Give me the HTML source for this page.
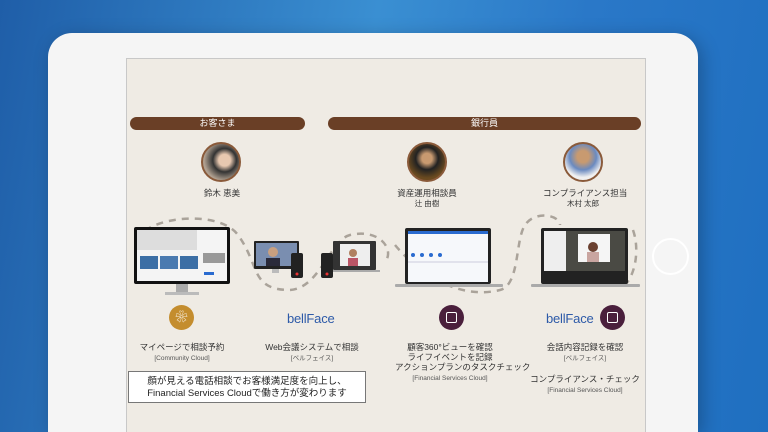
<!DOCTYPE html>
<html><head><meta charset="utf-8"><style>
*{margin:0;padding:0;box-sizing:border-box}
html,body{width:768px;height:432px;overflow:hidden}
body{position:relative;font-family:"Liberation Sans","Noto Sans CJK JP",sans-serif;background:linear-gradient(100deg,#1f5ea8 0%,#3a8fd2 45%,#2a78c8 70%,#1f6fc0 100%)}
.tab{position:absolute;left:48px;top:33px;width:650px;height:399px;background:#f5f5f5;border-radius:24px 24px 0 0;box-shadow:4px 4px 18px rgba(0,0,0,.25)}
.scr{position:absolute;left:126px;top:58px;width:520px;height:374px;background:#efebe4;border:1px solid #c8c8c8;border-bottom:none}
.home{position:absolute;left:652px;top:238px;width:37px;height:37px;border-radius:50%;border:2px solid #fff}
.a{position:absolute}
.bar{position:absolute;height:13px;background:#6a3f26;border-radius:7px;color:#fff;font-size:9px;text-align:center;line-height:13px}
.av{position:absolute;width:40px;height:40px;border-radius:50%;border:2px solid #8a5a3a;overflow:hidden}
.t{position:absolute;font-size:8.5px;color:#333;text-align:center;line-height:10px;white-space:nowrap}
.s{font-size:6.5px;color:#555}
.bf{position:absolute;font-size:13px;color:#2d5aa8;letter-spacing:-.2px}
.ic{position:absolute;width:25px;height:25px;border-radius:50%}
</style></head><body>
<div class="tab"></div>
<div class="home"></div>
<div class="scr"></div>
<svg class="a" style="left:0;top:0" width="768" height="432">
<g fill="none" stroke="#aaa39a" stroke-width="2.5" stroke-dasharray="7 6">
<path d="M136 240 C150 215 220 210 238 235 C260 265 250 290 290 290 C320 288 330 240 350 235 C380 228 395 250 385 262"/>
<path d="M395 245 C420 275 460 300 500 290 C520 285 515 240 525 225 C535 210 560 215 560 225"/>
<path d="M633 230 C640 250 635 275 625 285"/>
</g>
<rect x="134" y="227" width="96" height="57" rx="2" fill="#111"/>
<rect x="137" y="230" width="90" height="51" fill="#f4f4f4"/>
<rect x="137" y="230" width="60" height="20" fill="#ddd"/>
<rect x="140" y="256" width="18" height="13" fill="#3b6ea5"/><rect x="160" y="256" width="18" height="13" fill="#4a7ab0"/><rect x="180" y="256" width="18" height="13" fill="#3b6ea5"/>
<rect x="203" y="253" width="22" height="10" fill="#999"/><rect x="204" y="272" width="10" height="3" fill="#2a6bd0"/>
<rect x="176" y="284" width="12" height="9" fill="#aaa"/><rect x="165" y="292" width="34" height="3" fill="#bbb"/>
<rect x="254" y="241" width="45" height="28" rx="1" fill="#222"/><rect x="256" y="243" width="41" height="23" fill="#7a8eb0"/>
<circle cx="273" cy="252" r="5" fill="#c9a080"/><rect x="266" y="258" width="14" height="8" fill="#2a2a3a"/>
<rect x="272" y="269" width="7" height="4" fill="#bbb"/>
<rect x="291" y="253" width="12" height="25" rx="2" fill="#222"/><circle cx="297" cy="274" r="1.5" fill="#e33"/>
<rect x="333" y="241" width="43" height="29" rx="1" fill="#333"/><rect x="340" y="244" width="30" height="22" fill="#eee"/>
<circle cx="353" cy="253" r="4" fill="#b08060"/><rect x="348" y="258" width="10" height="8" fill="#b56"/>
<rect x="330" y="270" width="50" height="2" fill="#aaa"/>
<rect x="321" y="253" width="12" height="25" rx="2" fill="#222"/><circle cx="327" cy="274" r="1.5" fill="#e33"/>
<rect x="405" y="228" width="86" height="56" rx="2" fill="#222"/><rect x="408" y="231" width="80" height="51" fill="#f6f8fb"/>
<rect x="408" y="231" width="80" height="3" fill="#2a6bd0"/>
<g fill="#2a6bd0"><circle cx="413" cy="255" r="2"/><circle cx="422" cy="255" r="2"/><circle cx="431" cy="255" r="2"/><circle cx="440" cy="255" r="2"/></g>
<line x1="408" y1="262" x2="488" y2="262" stroke="#ccd"/>
<rect x="395" y="284" width="108" height="3" rx="1" fill="#aaa"/>
<rect x="541" y="228" width="87" height="56" rx="2" fill="#222"/><rect x="544" y="231" width="81" height="40" fill="#4a4a44"/>
<rect x="544" y="231" width="22" height="40" fill="#eee"/><rect x="578" y="234" width="32" height="28" fill="#f5f5f5"/>
<circle cx="593" cy="247" r="5" fill="#6a4030"/><rect x="587" y="252" width="12" height="10" fill="#c9a5a0"/>
<rect x="531" y="284" width="109" height="3" rx="1" fill="#aaa"/>
</svg>
<div class="bar" style="left:130px;top:117px;width:175px">お客さま</div>
<div class="bar" style="left:328px;top:117px;width:313px">銀行員</div>
<div class="av" style="left:201px;top:142px;background:radial-gradient(circle at 60% 45%,#e8c8b0 20%,#333 40%,#b0a090 70%)"></div>
<div class="av" style="left:407px;top:142px;background:radial-gradient(circle at 50% 40%,#c89a70 18%,#222 40%,#6a4a20 70%)"></div>
<div class="av" style="left:563px;top:142px;background:radial-gradient(circle at 50% 35%,#c89a70 20%,#6a8ac0 45%,#f0f0f0 70%)"></div>
<div class="t" style="left:192px;top:188px;width:60px">鈴木 恵美</div>
<div class="t" style="left:387px;top:188px;width:80px">資産運用相談員<br><span style="font-size:7.5px">辻 由樹</span></div>
<div class="t" style="left:543px;top:188px;width:80px">コンプライアンス担当<br><span style="font-size:7.5px">木村 太郎</span></div>
<div class="ic" style="left:169px;top:305px;background:#c48d2e;color:#fff;font-size:12px;text-align:center;line-height:25px">❀</div>
<div class="bf" style="left:287px;top:311px">bellFace</div>
<div class="ic" style="left:439px;top:305px;background:#4a1f3c"><div style="margin:7px;width:11px;height:11px;border:1.5px solid #fff;border-radius:2px"></div></div>
<div class="bf" style="left:546px;top:311px">bellFace</div>
<div class="ic" style="left:600px;top:305px;background:#4a1f3c"><div style="margin:7px;width:11px;height:11px;border:1.5px solid #fff;border-radius:2px"></div></div>
<div class="t" style="left:132px;top:342px;width:100px">マイページで相談予約<br><span class="s">[Community Cloud]</span></div>
<div class="t" style="left:262px;top:342px;width:100px">Web会議システムで相談<br><span class="s">[ベルフェイス]</span></div>
<div class="t" style="left:395px;top:342px;width:110px">顧客360°ビューを確認<br>ライフイベントを記録<br>アクションプランのタスクチェック<br><span class="s">[Financial Services Cloud]</span></div>
<div class="t" style="left:530px;top:342px;width:110px">会話内容記録を確認<br><span class="s">[ベルフェイス]</span><br><br>コンプライアンス・チェック<br><span class="s">[Financial Services Cloud]</span></div>
<div class="a" style="left:128px;top:371px;width:238px;height:32px;background:#fff;border:1px solid #777;font-size:9.5px;line-height:12px;color:#222;text-align:center;padding-top:4px">顔が見える電話相談でお客様満足度を向上し、<br>Financial Services Cloudで働き方が変わります</div>
</body></html>
